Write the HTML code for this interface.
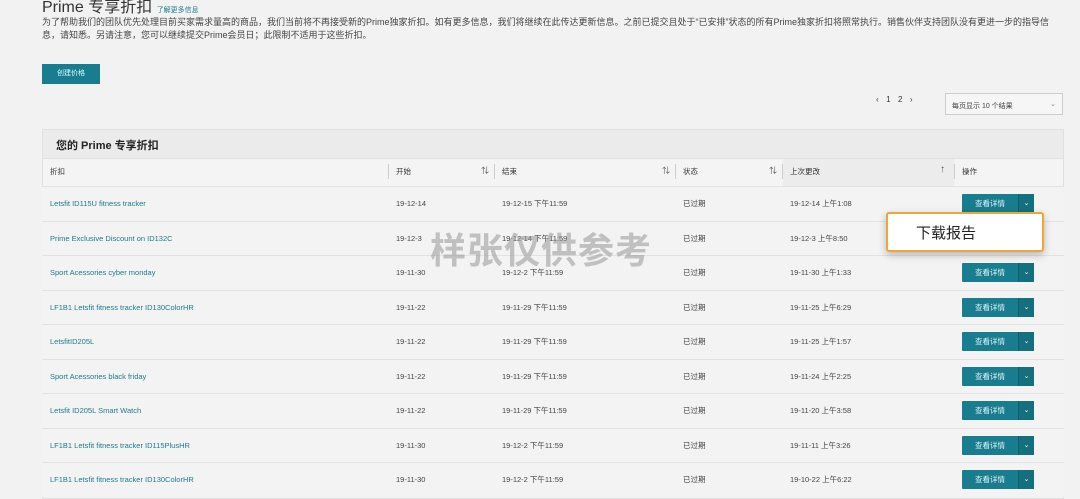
<!DOCTYPE html>
<html><head><meta charset="utf-8"><style>
*{margin:0;padding:0;box-sizing:border-box}
body{width:1080px;height:498px;overflow:hidden;background:#f2f2f2;font-family:"Liberation Sans","Noto Sans CJK SC",sans-serif;color:#333;position:relative}
.a{position:absolute;white-space:nowrap}
.t{font-size:9px;color:#444;line-height:12px}
.row{position:absolute;left:42px;width:1022px;height:34.5px;border-top:1px solid #e2e2e2;background:#f3f3f3}
.row span{position:absolute;top:12px;font-size:7.5px;line-height:10px;color:#444}
.row span.n{color:#1b7a8c}
.btn{position:absolute;left:920px;top:7px;width:72px;height:19px;background:#187d8e;border-radius:1px}
.btn b{position:absolute;left:0;width:56px;top:5px;line-height:10px;text-align:center;font-size:7.5px;color:#e8f4f6;font-weight:normal}
.btn i{position:absolute;left:56px;top:0;width:16px;height:19px;border-left:1px solid #0f5f6d;background:#14707f;color:#fff;font-size:7px;font-style:normal;text-align:center;line-height:19px}
.hd{position:absolute;top:167px;font-size:7.5px;line-height:10px;color:#333}
.dv{position:absolute;top:164px;width:1px;height:15px;background:#ccc}
.so{position:absolute;top:166px;font-size:8px;line-height:10px;color:#555}
</style></head><body>
<div class="a" style="left:42px;top:-7px;font-size:16px;color:#333">Prime 专享折扣 <span style="font-size:7px;color:#1b7a8c">了解更多信息</span></div>
<div class="a t" style="left:42px;top:16px">为了帮助我们的团队优先处理目前买家需求量高的商品，我们当前将不再接受新的Prime独家折扣。如有更多信息，我们将继续在此传达更新信息。之前已提交且处于“已安排”状态的所有Prime独家折扣将照常执行。销售伙伴支持团队没有更进一步的指导信</div>
<div class="a t" style="left:42px;top:29px">息，请知悉。另请注意，您可以继续提交Prime会员日；此限制不适用于这些折扣。</div>
<div class="a" style="left:42px;top:64px;width:58px;height:20px;background:#187d8e;color:#dff;font-size:7px;text-align:center;line-height:20px">创建价格</div>
<div class="a" style="left:876px;top:95px;font-size:8px;color:#333;letter-spacing:1px">‹&nbsp; 1 &nbsp;2 &nbsp;›</div>
<div class="a" style="left:945px;top:93px;width:118px;height:22px;border:1px solid #ccc;background:#f6f6f6;font-size:7px;color:#444;padding:7px 0 0 6px">每页显示 10 个结果<span style="position:absolute;right:6px;top:6px;font-size:7px;color:#888">⌄</span></div>
<div class="a" style="left:42px;top:129px;width:1022px;height:370px;border:1px solid #e0e0e0;background:#f3f3f3"></div>
<div class="a" style="left:43px;top:130px;width:1020px;height:28px;background:#ebebeb"></div>
<div class="a" style="left:56px;top:137px;font-size:11px;font-weight:bold;color:#222">您的 Prime 专享折扣</div>
<div class="a" style="left:43px;top:158px;width:1020px;height:28px;background:#f4f4f4;border-top:1px solid #e0e0e0"></div>
<div class="a" style="left:783px;top:159px;width:171px;height:27px;background:#ececec"></div>
<div class="hd" style="left:50px">折扣</div>
<div class="dv" style="left:388px"></div><div class="hd" style="left:396px">开始</div><div class="so" style="left:481px">⇅</div>
<div class="dv" style="left:494px"></div><div class="hd" style="left:502px">结束</div><div class="so" style="left:662px">⇅</div>
<div class="dv" style="left:675px"></div><div class="hd" style="left:683px">状态</div><div class="so" style="left:769px">⇅</div>
<div class="dv" style="left:782px"></div><div class="hd" style="left:790px">上次更改</div><div class="so" style="left:940px;font-size:10px;top:165px">↑</div>
<div class="dv" style="left:954px"></div><div class="hd" style="left:962px">操作</div>

<div class="row" style="top:186px"><span class="n" style="left:8px">Letsfit ID115U fitness tracker</span><span style="left:354px">19-12-14</span><span style="left:460px">19-12-15 下午11:59</span><span style="left:641px">已过期</span><span style="left:748px">19-12-14 上午1:08</span><div class="btn"><b>查看详情</b><i>⌄</i></div></div>
<div class="row" style="top:220.5px"><span class="n" style="left:8px">Prime Exclusive Discount on ID132C</span><span style="left:354px">19-12-3</span><span style="left:460px">19-12-14 下午11:59</span><span style="left:641px">已过期</span><span style="left:748px">19-12-3 上午8:50</span></div>
<div class="row" style="top:255px"><span class="n" style="left:8px">Sport Acessories cyber monday</span><span style="left:354px">19-11-30</span><span style="left:460px">19-12-2 下午11:59</span><span style="left:641px">已过期</span><span style="left:748px">19-11-30 上午1:33</span><div class="btn"><b>查看详情</b><i>⌄</i></div></div>
<div class="row" style="top:289.5px"><span class="n" style="left:8px">LF1B1 Letsfit fitness tracker ID130ColorHR</span><span style="left:354px">19-11-22</span><span style="left:460px">19-11-29 下午11:59</span><span style="left:641px">已过期</span><span style="left:748px">19-11-25 上午6:29</span><div class="btn"><b>查看详情</b><i>⌄</i></div></div>
<div class="row" style="top:324px"><span class="n" style="left:8px">LetsfitID205L</span><span style="left:354px">19-11-22</span><span style="left:460px">19-11-29 下午11:59</span><span style="left:641px">已过期</span><span style="left:748px">19-11-25 上午1:57</span><div class="btn"><b>查看详情</b><i>⌄</i></div></div>
<div class="row" style="top:358.5px"><span class="n" style="left:8px">Sport Acessories black friday</span><span style="left:354px">19-11-22</span><span style="left:460px">19-11-29 下午11:59</span><span style="left:641px">已过期</span><span style="left:748px">19-11-24 上午2:25</span><div class="btn"><b>查看详情</b><i>⌄</i></div></div>
<div class="row" style="top:393px"><span class="n" style="left:8px">Letsfit ID205L Smart Watch</span><span style="left:354px">19-11-22</span><span style="left:460px">19-11-29 下午11:59</span><span style="left:641px">已过期</span><span style="left:748px">19-11-20 上午3:58</span><div class="btn"><b>查看详情</b><i>⌄</i></div></div>
<div class="row" style="top:427.5px"><span class="n" style="left:8px">LF1B1 Letsfit fitness tracker ID115PlusHR</span><span style="left:354px">19-11-30</span><span style="left:460px">19-12-2 下午11:59</span><span style="left:641px">已过期</span><span style="left:748px">19-11-11 上午3:26</span><div class="btn"><b>查看详情</b><i>⌄</i></div></div>
<div class="row" style="top:462px"><span class="n" style="left:8px">LF1B1 Letsfit fitness tracker ID130ColorHR</span><span style="left:354px">19-11-30</span><span style="left:460px">19-12-2 下午11:59</span><span style="left:641px">已过期</span><span style="left:748px">19-10-22 上午6:22</span><div class="btn"><b>查看详情</b><i>⌄</i></div></div>

<div class="a" style="left:886px;top:212px;width:158px;height:40px;background:#fff;border:2px solid #eea53a;border-radius:3px;box-shadow:0 3px 8px rgba(0,0,0,.25)"></div>
<div class="a" style="left:916px;top:222px;font-size:15px;color:#222">下载报告</div>
<div class="a" style="left:430px;top:222px;font-size:36px;font-weight:bold;color:rgba(150,150,150,.55);letter-spacing:1px">样张仅供参考</div>
</body></html>
